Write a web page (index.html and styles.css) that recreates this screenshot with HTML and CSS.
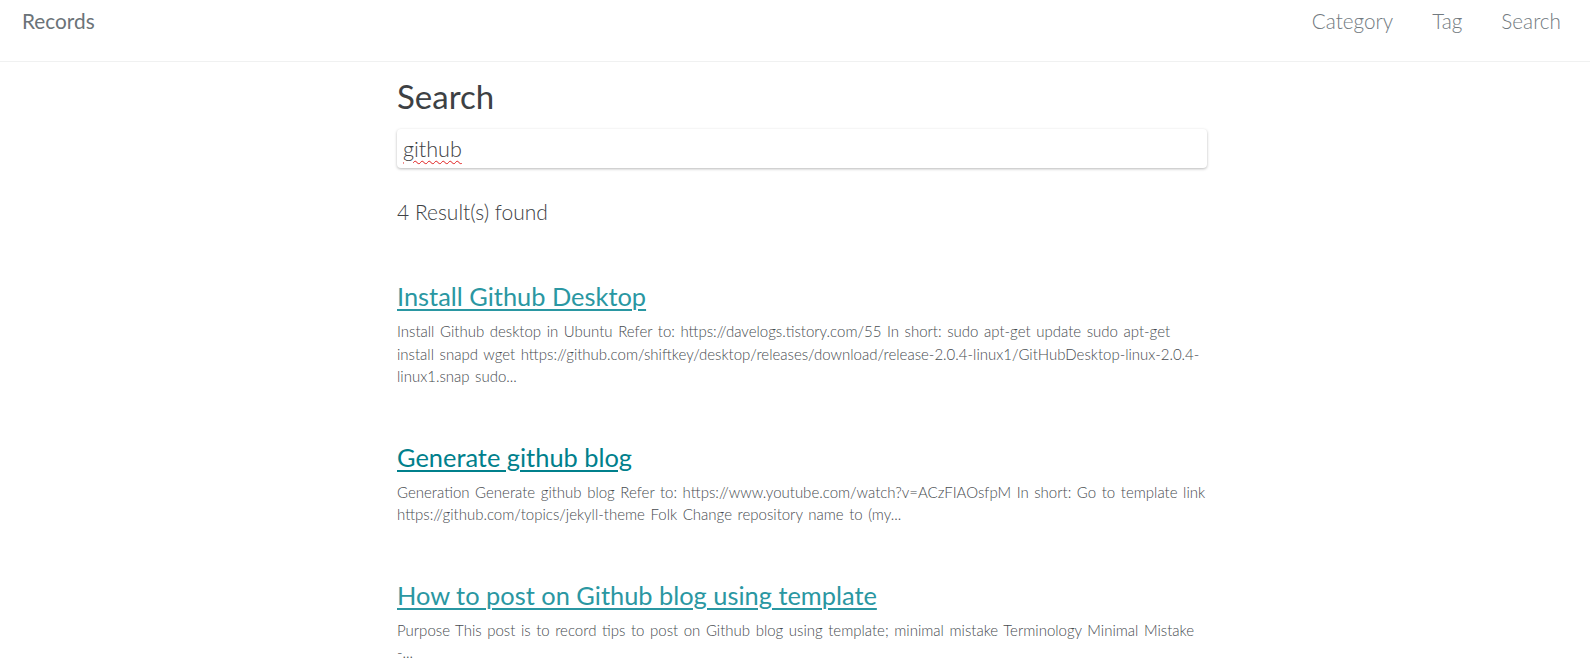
FILE: index.html
```html
<!DOCTYPE html>
<html lang="en">
<head>
<meta charset="utf-8">
<title>Search - Records</title>
<link rel="stylesheet" href="styles.css">
</head>
<body>
<header class="masthead">
  <a class="site-title" href="#">Records</a>
  <nav class="nav">
    <a class="nav-link" href="#">Category</a>
    <a class="nav-link" href="#">Tag</a>
    <a class="nav-link" href="#">Search</a>
  </nav>
</header>
<main class="page">
  <h1 class="page-title">Search</h1>
  <div class="search-box"><span class="search-text">github</span></div>
  <p class="results-count">4 Result(s) found</p>
  <article class="result">
    <h2 class="result-title"><a href="#">Install Github Desktop</a></h2>
    <p class="result-excerpt">Install Github desktop in Ubuntu Refer to: https://davelogs.tistory.com/55 In short: sudo apt-get update sudo apt-get install snapd wget https://github.com/shiftkey/desktop/releases/download/release-2.0.4-linux1/GitHubDesktop-linux-2.0.4-linux1.snap sudo...</p>
  </article>
  <article class="result">
    <h2 class="result-title"><a class="visited" href="#">Generate github blog</a></h2>
    <p class="result-excerpt">Generation Generate github blog Refer to: https://www.youtube.com/watch?v=ACzFIAOsfpM In short: Go to template link https://github.com/topics/jekyll-theme Folk Change repository name to (my...</p>
  </article>
  <article class="result">
    <h2 class="result-title"><a href="#">How to post on Github blog using template</a></h2>
    <p class="result-excerpt">Purpose This post is to record tips to post on Github blog using template; minimal mistake Terminology Minimal Mistake -...</p>
  </article>
</main>
</body>
</html>
```
FILE: styles.css
```css
html, body {
  margin: 0;
  padding: 0;
  background: #ffffff;
}
body {
  font-family: "Lato", "Open Sans", sans-serif;
  color: #3d4144;
}
.masthead {
  display: flex;
  justify-content: space-between;
  align-items: flex-start;
  border-bottom: 1px solid #f0f1f1;
  padding: 8px 29px 0 22px;
  box-sizing: content-box;
  height: 53px;
}
.site-title {
  font-size: 20.8px;
  line-height: 26px;
  color: #6b7378;
  text-decoration: none;
}
.nav {
  display: flex;
  gap: 39px;
}
.nav-link {
  font-size: 20.7px;
  line-height: 26px;
  font-weight: 300;
  color: #727a80;
  text-decoration: none;
}
.page {
  width: 810px;
  margin: 0 auto;
  padding-left: 14px;
  box-sizing: content-box;
}
.page-title {
  margin: 0;
  padding-top: 13px;
  font-size: 33px;
  line-height: 42px;
  font-weight: 400;
  color: #3d4144;
}
.search-box {
  margin-top: 12px;
  height: 39px;
  border-radius: 4px;
  box-shadow: 0 1px 3px rgba(0, 0, 0, 0.28);
  display: flex;
  align-items: center;
  padding: 0 6px;
}
.search-text {
  font-size: 21.6px;
  font-weight: 300;
  color: #3d4144;
  text-decoration: underline wavy #e02020 1px;
  text-underline-offset: 3px;
}
.results-count {
  margin: 29px 0 0;
  font-size: 21px;
  line-height: 30px;
  font-weight: 300;
  color: #3d4144;
}
.result {
  margin-top: 51px;
}
.result + .result {
  margin-top: 51px;
}
.result-title {
  margin: 0;
  font-size: 25.4px;
  line-height: 36px;
  font-weight: 400;
}
.result-title a {
  color: #2a97a2;
  text-decoration: underline;
  text-decoration-thickness: 2px;
  text-underline-offset: 3px;
}
.result-title a.visited {
  color: #00808c;
}
.result-excerpt {
  margin: 6px 0 0;
  font-size: 15px;
  line-height: 22.5px;
  font-weight: 300;
  word-spacing: 1.5px;
  color: #474c50;
}
```
